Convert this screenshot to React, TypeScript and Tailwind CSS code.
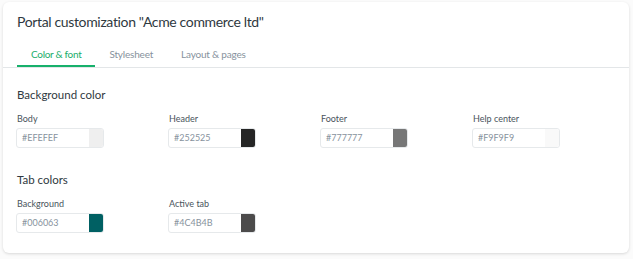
import React from 'react';

type Field = { label: string; value: string; swatch: string };

const backgroundFields: Field[] = [
  { label: 'Body', value: '#EFEFEF', swatch: '#efefef' },
  { label: 'Header', value: '#252525', swatch: '#252525' },
  { label: 'Footer', value: '#777777', swatch: '#777777' },
  { label: 'Help center', value: '#F9F9F9', swatch: '#f9f9f9' },
];

const tabFields: Field[] = [
  { label: 'Background', value: '#006063', swatch: '#006063' },
  { label: 'Active tab', value: '#4C4B4B', swatch: '#4c4b4b' },
];

function ColorInput({ label, value, swatch }: Field) {
  return (
    <div className="flex flex-col w-[88px]">
      <span className="text-[9px] leading-[11px] text-[#49545c] mb-[4px] pl-px">{label}</span>
      <div className="flex h-[20px] rounded-[3px] border border-[#e6e9eb] overflow-hidden bg-white">
        <span className="flex-1 pl-[5px] text-[9px] leading-[18px] text-[#87929d]">{value}</span>
        <span className="w-[14px] h-full" style={{ backgroundColor: swatch }} />
      </div>
    </div>
  );
}

function Section({ title, fields }: { title: string; fields: Field[] }) {
  return (
    <div className="flex flex-col">
      <h2 className="text-[11.5px] leading-[14px] text-[#2f3941] mb-[11px] pl-px">{title}</h2>
      <div className="grid grid-cols-[152px_152px_152px_152px]">
        {fields.map((f) => (
          <ColorInput key={f.label} {...f} />
        ))}
      </div>
    </div>
  );
}

export default function App() {
  return (
    <div className="w-[633px] h-[259px] bg-[#fbfbfb] pt-[2px] pl-[3px] font-['Lato',sans-serif]">
      <div className="w-[626px] h-[251px] bg-white rounded-[6px] shadow-[0_1px_3px_rgba(0,0,0,0.14)] flex flex-col">
        <div className="px-[14px] pt-[11px]">
          <h1 className="text-[14px] leading-[18px] tracking-[-0.35px] text-[#2f3941]">
            Portal customization "Acme commerce ltd"
          </h1>
        </div>
        <div className="flex px-[14px] mt-[17px] border-b border-[#e3e6e8]">
          <button className="px-[14px] pb-[5px] text-[10px] leading-[12px] tracking-[-0.3px] text-[#1aad6a] border-b-2 border-[#17b06b]">
            Color &amp; font
          </button>
          <button className="px-[14px] pb-[7px] text-[10px] leading-[12px] tracking-[-0.2px] text-[#87929d]">
            Stylesheet
          </button>
          <button className="px-[14px] pb-[7px] text-[10px] leading-[12px] tracking-[-0.2px] text-[#87929d]">
            Layout &amp; pages
          </button>
        </div>
        <div className="flex flex-col gap-[25px] px-[13px] pt-[20px]">
          <Section title="Background color" fields={backgroundFields} />
          <Section title="Tab colors" fields={tabFields} />
        </div>
      </div>
    </div>
  );
}
